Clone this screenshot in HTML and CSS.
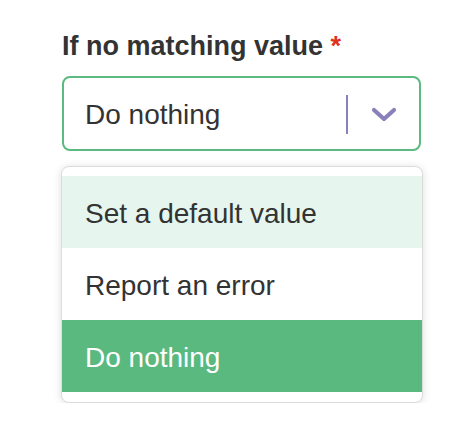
FILE: index.html
```html
<!DOCTYPE html>
<html>
<head>
<meta charset="utf-8">
<link rel="stylesheet" href="styles.css">
</head>
<body>
<div class="field">
  <label class="label">If no matching value <span class="req">*</span></label>
  <div class="select">
    <span class="value">Do nothing</span>
    <span class="sep"></span>
    <svg class="chev" width="26" height="16" viewBox="0 0 26 16"><path d="M3 3 L13 12 L23 3" fill="none" stroke="#8a80ba" stroke-width="4.2" stroke-linecap="round" stroke-linejoin="round"/></svg>
  </div>
  <ul class="menu">
    <li class="opt hover">Set a default value</li>
    <li class="opt">Report an error</li>
    <li class="opt selected">Do nothing</li>
  </ul>
</div>
</body>
</html>
```

FILE: styles.css
```css
html, body {
  margin: 0;
  padding: 0;
  background: #fff;
}
body {
  font-family: "Liberation Sans", Arial, sans-serif;
  color: #333;
}
.field {
  padding: 31px 0 0 62px;
  width: 361px;
}
.label {
  display: block;
  font-weight: bold;
  font-size: 27px;
  line-height: 30px;
  color: #333;
}
.req {
  color: #e0301e;
}
.select {
  margin-top: 15px;
  box-sizing: border-box;
  width: 359px;
  height: 75px;
  border: 2px solid #5cb97f;
  border-radius: 8px;
  display: flex;
  align-items: center;
  padding: 0 22px 0 21px;
}
.value {
  flex: 1;
  font-size: 28px;
  margin-top: 3px;
}
.sep {
  width: 2px;
  height: 39px;
  background: #8a80ba;
  margin-right: 23px;
  margin-top: 1px;
}
.chev {
  display: block;
  margin-top: 2px;
}
.menu {
  list-style: none;
  margin: 15px 0 0 -1px;
  padding: 9px 0 10px;
  box-sizing: border-box;
  width: 362px;
  border: 1px solid #dcdcdc;
  border-radius: 8px;
  box-shadow: 0 1px 8px rgba(0,0,0,0.13);
  background: #fff;
}
.opt {
  height: 70px;
  padding-top: 2px;
  line-height: 72px;
  font-size: 28px;
  padding-left: 23px;
  color: #333;
  overflow: hidden;
}
.opt.hover {
  background: #e6f6ee;
}
.opt.selected {
  background: #5ab97e;
  color: #fff;
}
```
